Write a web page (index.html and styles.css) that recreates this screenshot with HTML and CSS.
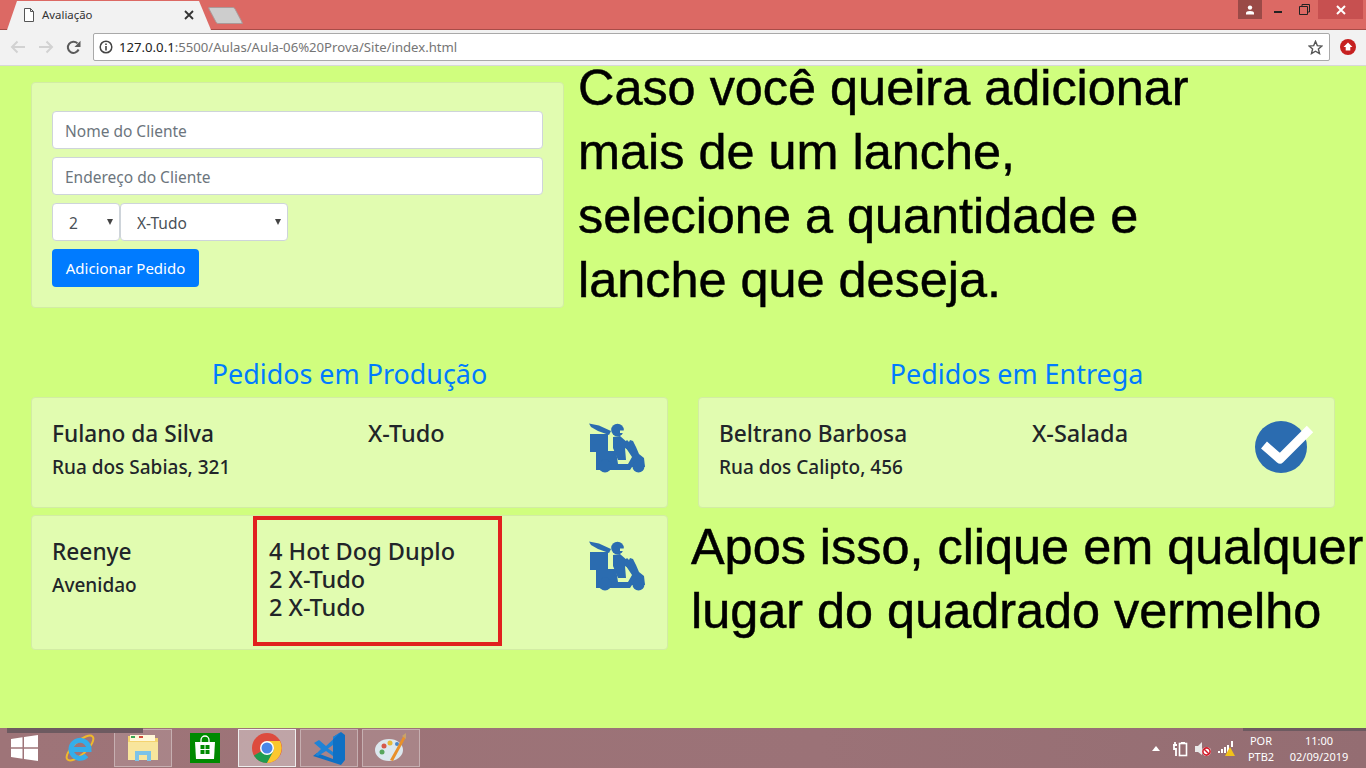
FILE: index.html
```html
<!DOCTYPE html>
<html lang="pt-BR">
<head>
  <meta charset="UTF-8">
  <meta name="viewport" content="width=device-width,initial-scale=1"/>
  <title>Avaliação</title>
  <link rel="stylesheet" href="styles.css">
</head>
<body>
  <svg class="defs" width="0" height="0">
    <symbol id="moto" viewBox="18 12 58 52">
      <path d="M19 13.500 L29 15.500 L41 21 L39 25 L28 21 L21 17 Z"/>
      <circle cx="47.500" cy="20" r="6.300"/>
      <path d="M50 20.500 H54 V23 H50 Z" fill="#e1fcb0"/>
      <rect x="20" y="24" width="18" height="18"/>
      <path d="M43 27 L50 26 L58 33 L63 38 L60 41 L55 38 L56 50 L48 50 L43 38 Z"/>
      <path d="M26 41 H46 L48 54 H58 L62 47 L56 38 L55 32 L57 30 L59 32 L60 30 L63 31 L66 37 L69 44 L74 48 L75 57 H62 L60 60 H42 L40 60 H26 Z"/>
      <circle cx="35" cy="56" r="6.500"/>
      <circle cx="68.500" cy="56.500" r="6"/>
    </symbol>
  </svg>

  <header class="cromo">
    <div class="abas">
      <div class="aba">
        <svg class="aba-doc" width="12" height="14" viewBox="0 0 12 14"><path d="M1.500.5H7.500L10.500 3.500V13.500H1.500Z M7.500.5V3.500H10.500" fill="#fff" stroke="#555"/></svg>
        <span class="aba-titulo">Avaliação</span>
        <svg class="aba-x" width="10" height="10" viewBox="0 0 10 10"><path d="M1 1L9 9M9 1L1 9" stroke="#333" stroke-width="1.800"/></svg>
      </div>
      <div class="nova-aba"></div>
      <div class="janela">
        <div class="perfil">
          <svg width="10" height="10" viewBox="0 0 10 10"><circle cx="5" cy="2.600" r="2.200" fill="#fff"/><path d="M1 9.500V8Q1 6 5 6T9 8V9.500Z" fill="#fff"/></svg>
        </div>
        <div class="btn-min"><span></span></div>
        <div class="btn-rest">
          <svg width="11" height="11" viewBox="0 0 11 11"><path d="M3 2.500V.5H10.500V8H8.500M.5 2.500H8.500V10.500H.5Z" fill="none" stroke="#222"/></svg>
        </div>
        <div class="btn-fechar">
          <svg width="10" height="10" viewBox="0 0 10 10"><path d="M1 1L9 9M9 1L1 9" stroke="#fff" stroke-width="2"/></svg>
        </div>
      </div>
    </div>
    <div class="barra">
      <svg class="nav" width="16" height="14" viewBox="0 0 16 14"><path d="M15 7H2M7.500 1.500L2 7L7.500 12.500" fill="none" stroke="#d2d2d2" stroke-width="2"/></svg>
      <svg class="nav" width="16" height="14" viewBox="0 0 16 14"><path d="M1 7H14M8.500 1.500L14 7L8.500 12.500" fill="none" stroke="#d2d2d2" stroke-width="2"/></svg>
      <svg class="nav" width="15" height="15" viewBox="0 0 15 15"><path d="M12.600 9.500A5.600 5.600 0 1 1 11.500 3.400" fill="none" stroke="#5a5a5a" stroke-width="2"/><path d="M14.500 .8V7H8.500Z" fill="#5a5a5a"/></svg>
      <div class="endereco">
        <svg width="14" height="14" viewBox="0 0 14 14"><circle cx="7" cy="7" r="5.800" fill="none" stroke="#444" stroke-width="1.500"/><path d="M7 6V10.500M7 3.500V5" stroke="#444" stroke-width="1.600"/></svg>
        <span class="url"><b>127.0.0.1</b>:5500/Aulas/Aula-06%20Prova/Site/index.html</span>
        <svg class="estrela" width="15" height="15" viewBox="0 0 15 15"><path d="M7.500 1.300L9.300 5.600L14 6L10.400 9L11.500 13.600L7.500 11.200L3.500 13.600L4.600 9L1 6L5.700 5.600Z" fill="none" stroke="#555" stroke-width="1.400"/></svg>
      </div>
      <svg class="extensao" width="16" height="16" viewBox="0 0 16 16"><circle cx="8" cy="8" r="8" fill="#c62020"/><path d="M8 3.500L12.500 8H10.300V11.500H5.700V8H3.500Z" fill="#fff"/></svg>
    </div>
  </header>

  <main class="pagina">
    <section class="topo">
      <form class="card formulario">
        <input class="campo" type="text" placeholder="Nome do Cliente">
        <input class="campo" type="text" placeholder="Endereço do Cliente">
        <div class="selects">
          <div class="sel sel-qtd"><select><option>2</option></select></div>
          <div class="sel sel-lanche"><select><option>X-Tudo</option></select></div>
        </div>
        <button class="btn" type="button">Adicionar Pedido</button>
      </form>
      <p class="aviso aviso-topo">Caso você queira adicionar mais de um lanche, selecione a quantidade e lanche que deseja.</p>
    </section>

    <section class="pedidos">
      <div class="coluna">
        <h2>Pedidos em Produção</h2>
        <div class="card pedido">
          <div class="cliente cliente-largo">
            <div class="nome">Fulano da Silva</div>
            <div class="rua">Rua dos Sabias, 321</div>
          </div>
          <div class="itens">X-Tudo</div>
          <svg class="ico-moto"><use href="#moto"/></svg>
        </div>
        <div class="card pedido">
          <div class="cliente cliente-curto">
            <div class="nome">Reenye</div>
            <div class="rua">Avenidao</div>
          </div>
          <div class="itens itens-lista">
            <div>4 Hot Dog Duplo</div>
            <div>2 X-Tudo</div>
            <div>2 X-Tudo</div>
          </div>
          <svg class="ico-moto"><use href="#moto"/></svg>
          <div class="marca"></div>
        </div>
      </div>
      <div class="coluna">
        <h2>Pedidos em Entrega</h2>
        <div class="card pedido">
          <div class="cliente cliente-entrega">
            <div class="nome">Beltrano Barbosa</div>
            <div class="rua">Rua dos Calipto, 456</div>
          </div>
          <div class="itens">X-Salada</div>
          <svg class="ico-check" width="60" height="52" viewBox="0 0 60 52">
            <circle cx="27" cy="26" r="26" fill="#2b6cb0"/>
            <path d="M10 24L26 38L56 8" fill="none" stroke="#fff" stroke-width="9" stroke-linejoin="round"/>
          </svg>
        </div>
        <p class="aviso aviso-baixo">Apos isso, clique em qualquer lugar do quadrado vermelho</p>
      </div>
    </section>
  </main>

  <footer class="tarefas">
    <div class="faixa"></div>
    <div class="faixa-dir"></div>
    <svg class="t-win" width="27" height="26" viewBox="0 0 27 26"><path d="M0 4L11.500 2.300V12.300H0ZM13 2L27 0V12.300H13ZM0 13.700H11.500V23.700L0 22ZM13 13.700H27V26L13 24Z" fill="#fff"/></svg>
    <div class="t-ie">
      <svg width="30" height="30" viewBox="0 0 30 30">
        <ellipse cx="15" cy="15" rx="17" ry="6.500" transform="rotate(-42 15 15)" fill="none" stroke="#f0b92b" stroke-width="2"/>
        <path d="M6 16.500H24A9 9 0 1 0 21.500 22.500" fill="none" stroke="#34aeea" stroke-width="5"/>
      </svg>
    </div>
    <div class="t-btn t-pasta">
      <svg width="32" height="30" viewBox="0 0 32 30">
        <path d="M1 3H12L14 5H31V27H1Z" fill="#f4d36f"/>
        <path d="M3 2H28V8H3Z" fill="#fff7d8"/>
        <path d="M4 3H8V5H4Z" fill="#3aa655"/><path d="M12 3H16V5H12Z" fill="#d04a3a"/>
        <path d="M1 9H31V27H1Z" fill="#f8e59c"/>
        <path d="M8 28V18H24V28H20V22H12V28Z" fill="#7cc3e8"/>
      </svg>
    </div>
    <div class="t-store">
      <svg width="30" height="30" viewBox="0 0 30 30">
        <rect width="30" height="30" fill="#008a00"/>
        <path d="M11 9V7A4 4 0 0 1 19 7V9" fill="none" stroke="#fff" stroke-width="1.300"/>
        <path d="M5 9H25L24 26H6Z" fill="#fff"/>
        <path d="M10.500 12H14.500V16H10.500ZM15.500 12H19.500V16H15.500ZM10.500 17H14.500V21H10.500ZM15.500 17H19.500V21H15.500Z" fill="#008a00"/>
      </svg>
    </div>
    <div class="t-btn t-ativo">
      <svg width="30" height="30" viewBox="0 0 30 30">
        <circle cx="15" cy="15" r="15" fill="#dd4b3e"/>
        <path d="M15 15L2 22.500A15 15 0 0 0 15 30L22.500 17Z" fill="#1e9c50"/>
        <path d="M15 8H28A15 15 0 0 1 15 30L22 17Z" fill="#fbc72e"/>
        <circle cx="15" cy="15" r="7" fill="#fff"/>
        <circle cx="15" cy="15" r="5.500" fill="#4a86e8"/>
      </svg>
    </div>
    <div class="t-btn">
      <svg width="33" height="33" viewBox="0 0 33 33">
        <path d="M28 0L32 3V28L28 33L0 24L4 21L20 27V5Z" fill="#0f70c4"/>
        <path d="M28 0L13 14L6 8L1 11L8 17L2 23L5 24L13 19L20 24V20L15 16.500L20 13V5Z" fill="#1e83d6"/>
      </svg>
    </div>
    <div class="t-btn">
      <svg width="32" height="30" viewBox="0 0 32 30">
        <ellipse cx="14" cy="17" rx="14" ry="11" fill="#dce8ee"/>
        <circle cx="9" cy="13" r="2.500" fill="#d65a4a"/><circle cx="15" cy="10" r="2.500" fill="#e6b93a"/>
        <circle cx="7" cy="19" r="2.500" fill="#58a55c"/><circle cx="22" cy="11" r="2" fill="#4a86c8"/>
        <path d="M29 2L31 4L18 28L15 27Z" fill="#e8902a"/>
        <path d="M27 3L31 0V6Z" fill="#c9a26a"/>
      </svg>
    </div>

    <div class="bandeja">
      <svg width="8" height="5" viewBox="0 0 8 5"><path d="M0 5L4 0L8 5Z" fill="#fff"/></svg>
      <svg class="b-bat" width="16" height="16" viewBox="0 0 16 16"><path d="M1 4H5M3 1V4M2 4V8H4V15" fill="none" stroke="#fff" stroke-width="1.800"/><rect x="7.500" y="2.500" width="7" height="12" fill="none" stroke="#fff" stroke-width="1.600"/><rect x="9" y="1" width="4" height="2" fill="#fff"/></svg>
      <svg class="b-som" width="18" height="16" viewBox="0 0 18 16"><path d="M1 5H4L8 1V14L4 11H1Z" fill="#e8e8e8"/><circle cx="12.500" cy="10.500" r="4.500" fill="#fff"/><circle cx="12.500" cy="10.500" r="3.600" fill="none" stroke="#d01c2a" stroke-width="1.600"/><path d="M10 8L15 13" stroke="#d01c2a" stroke-width="1.500"/></svg>
      <svg class="b-rede" width="17" height="16" viewBox="0 0 17 16"><path d="M0 10H2V12H0ZM3 8H5V12H3ZM6 6H8V12H6ZM9 4H11V12H9ZM13 0H15V6H13Z" fill="#fff"/><path d="M12 6L17 15H7Z" fill="#f2c21a"/></svg>
      <div class="idioma"><span>POR</span><span>PTB2</span></div>
      <div class="hora"><span>11:00</span><span>02/09/2019</span></div>
    </div>
  </footer>
</body>
</html>
```

FILE: styles.css
```css
*{
  margin: 0; padding: 0;
  box-sizing: border-box;
}
html, body{
  height: 100%;
  overflow: hidden;
}
body{
  display: flex;
  flex-direction: column;
  font-family: "Noto Sans", sans-serif;
  background: #d0fe7e;
  color: #212529;
}
svg{
  display: block;
}
.defs{
  position: absolute;
}

/* navegador */
.cromo{
  flex: none;
}
.abas{
  position: relative;
  display: flex;
  height: 30px;
  background: #dc6964;
  border-bottom: 1px solid #a84c48;
}
.aba{
  display: flex;
  align-items: center;
  width: 204px;
  height: 30px;
  margin-left: 7px;
  padding: 0 17px 1px 16px;
  background: #f2f2f2;
  clip-path: polygon(0 100%, 10px 1px, 192px 1px, 204px 100%);
}
.aba-titulo{
  flex: 1;
  margin-left: 7px;
  font-size: 11.400px;
  color: #333;
}
.nova-aba{
  width: 27px;
  height: 17px;
  margin: 7px 0 0 1px;
  background: #cdcdcd;
  border: 1px solid #a99;
  border-radius: 2px;
  transform: skewX(28deg);
}
.janela{
  display: flex;
  margin-left: auto;
  height: 19px;
  padding-right: 3px;
}
.perfil{
  display: flex;
  align-items: center;
  justify-content: center;
  width: 24px;
  background: #9a4a47;
}
.btn-min{
  width: 25px;
  margin-left: 12px;
  padding-top: 11px;
}
.btn-min span{
  display: block;
  width: 8px;
  height: 2px;
  background: #222;
}
.btn-rest{
  width: 19px;
  padding-top: 4px;
}
.btn-fechar{
  display: flex;
  align-items: center;
  justify-content: center;
  width: 45px;
  background: #c75050;
}
.barra{
  display: flex;
  align-items: center;
  height: 36px;
  padding: 0 10px 1px 10px;
  background: #f2f2f2;
  border-bottom: 1px solid #d8d8d8;
}
.nav{
  margin-right: 12px;
}
.endereco{
  display: flex;
  flex: none;
  align-items: center;
  width: 1237px;
  height: 28px;
  padding: 0 6px 0 5px;
  background: #fff;
  border: 1px solid #a9a9a9;
  border-radius: 2px;
}
.url{
  flex: 1;
  margin-left: 6px;
  font-size: 13.150px;
  color: #757575;
}
.url b{
  font-weight: 400;
  color: #222;
}
.extensao{
  margin-left: 10px;
}

/* pagina */
.pagina{
  flex: 1;
  padding: 16px 31px 0;
}
.card{
  background: #e1fcb0;
  border: 1px solid #d2eca4;
  border-radius: 4px;
}
.topo{
  display: flex;
  align-items: flex-start;
  height: 226px;
}
.formulario{
  flex: none;
  width: 533px;
  height: 226px;
  padding: 28px 20px 0;
}
.campo{
  display: block;
  width: 491px;
  height: 38px;
  margin-bottom: 8px;
  padding: 2px 12px 0;
  font: 15.500px "Noto Sans", sans-serif;
  background: #fff;
  border: 1px solid #ced4da;
  border-radius: 4px;
}
.campo::placeholder{
  color: #6c757d;
}
.selects{
  display: flex;
  margin-bottom: 8px;
}
.sel{
  position: relative;
  height: 38px;
}
.sel select{
  appearance: none;
  width: 100%;
  height: 100%;
  padding: 2px 12px 0 16px;
  font: 15.500px "Noto Sans", sans-serif;
  color: #495057;
  background: #fff;
  border: 1px solid #ced4da;
  border-radius: 4px;
}
.sel::after{
  content: "";
  position: absolute;
  top: 16px;
  right: 7px;
  border: 3.500px solid transparent;
  border-top: 6px solid #444;
  border-bottom: 0;
}
.sel-qtd{
  width: 68px;
}
.sel-lanche{
  width: 168px;
}
.btn{
  width: 147px;
  height: 38px;
  font: 15px "Noto Sans", sans-serif;
  color: #fff;
  background: #007bff;
  border: 0;
  border-radius: 4px;
}
.aviso{
  font-family: "Liberation Sans", sans-serif;
  font-size: 50.400px;
  line-height: 64px;
  color: #000;
  -webkit-text-stroke: 0.5px #000;
}
.aviso-topo{
  flex: none;
  width: 625px;
  margin: -26px 0 0 14px;
}
.pedidos{
  display: grid;
  grid-template-columns: 637px 637px;
  column-gap: 30px;
  margin-top: 47px;
}
h2{
  height: 39px;
  margin-bottom: 3px;
  font-size: 26.900px;
  font-weight: 400;
  line-height: 37px;
  text-align: center;
  color: #007bff;
}
.pedido{
  position: relative;
  display: flex;
  align-items: flex-start;
  margin-bottom: 7px;
  padding: 22px 21px 26px 20px;
}
.cliente{
  flex: none;
}
.cliente-largo{
  width: 316px;
}
.cliente-curto{
  width: 217px;
}
.cliente-entrega{
  width: 313px;
}
.nome{
  font-size: 22.700px;
  font-weight: 500;
  line-height: 28px;
}
.itens{
  flex: 1;
  margin-top: -1px;
  font-size: 23.500px;
  font-weight: 500;
  line-height: 28px;
}
.itens-lista{
  margin-bottom: 2px;
}
.rua{
  margin-top: 5px;
  font-size: 19px;
  font-weight: 500;
  line-height: 28px;
}
.ico-moto{
  flex: none;
  width: 58px;
  height: 52px;
  margin-top: 2px;
}
.ico-moto use{
  fill: #2b6cb0;
}
.ico-check{
  flex: none;
  margin: 1px -1px 0 0;
}
.marca{
  position: absolute;
  left: 221px;
  top: 0;
  width: 249px;
  height: 130px;
  border: 4px solid #e1201e;
}
.aviso-baixo{
  margin: 5px -31px 0 -7px;
}

/* barra de tarefas */
.tarefas{
  position: relative;
  flex: none;
  display: flex;
  align-items: center;
  height: 40px;
  padding-left: 11px;
  background: linear-gradient(90deg, #9e7478, #9b7277 60%, #946d72);
}
.faixa{
  position: absolute;
  left: 7px;
  top: 0;
  width: 136px;
  height: 5px;
  background: #6d5a60;
}
.faixa-dir{
  position: absolute;
  right: 0;
  top: 0;
  width: 123px;
  height: 3px;
  background: #6d5a60;
}
.t-win{
  margin-right: 27px;
}
.t-ie{
  width: 30px;
  height: 30px;
  margin-right: 19px;
}
.t-btn{
  display: flex;
  align-items: center;
  justify-content: center;
  width: 58px;
  height: 38px;
  margin-right: 4px;
  background: rgba(255, 255, 255, 0.12);
  border: 1px solid rgba(255, 255, 255, 0.35);
}
.t-pasta{
  margin-right: 18px;
}
.t-store{
  height: 30px;
  margin-right: 18px;
}
.t-ativo{
  background: rgba(255, 255, 255, 0.35);
  border-color: #eee;
}
.bandeja{
  display: flex;
  align-items: center;
  margin-left: auto;
  height: 100%;
  padding: 1px 12px 0 0;
  color: #fff;
  font-size: 11px;
}
.b-bat{
  margin-left: 12px;
}
.b-som{
  margin-left: 6px;
}
.b-rede{
  margin-left: 6px;
}
.idioma, .hora{
  display: flex;
  flex-direction: column;
  align-items: center;
  line-height: 16px;
}
.idioma{
  width: 40px;
  margin-left: 6px;
}
.hora{
  width: 70px;
  margin-left: 3px;
}
```
